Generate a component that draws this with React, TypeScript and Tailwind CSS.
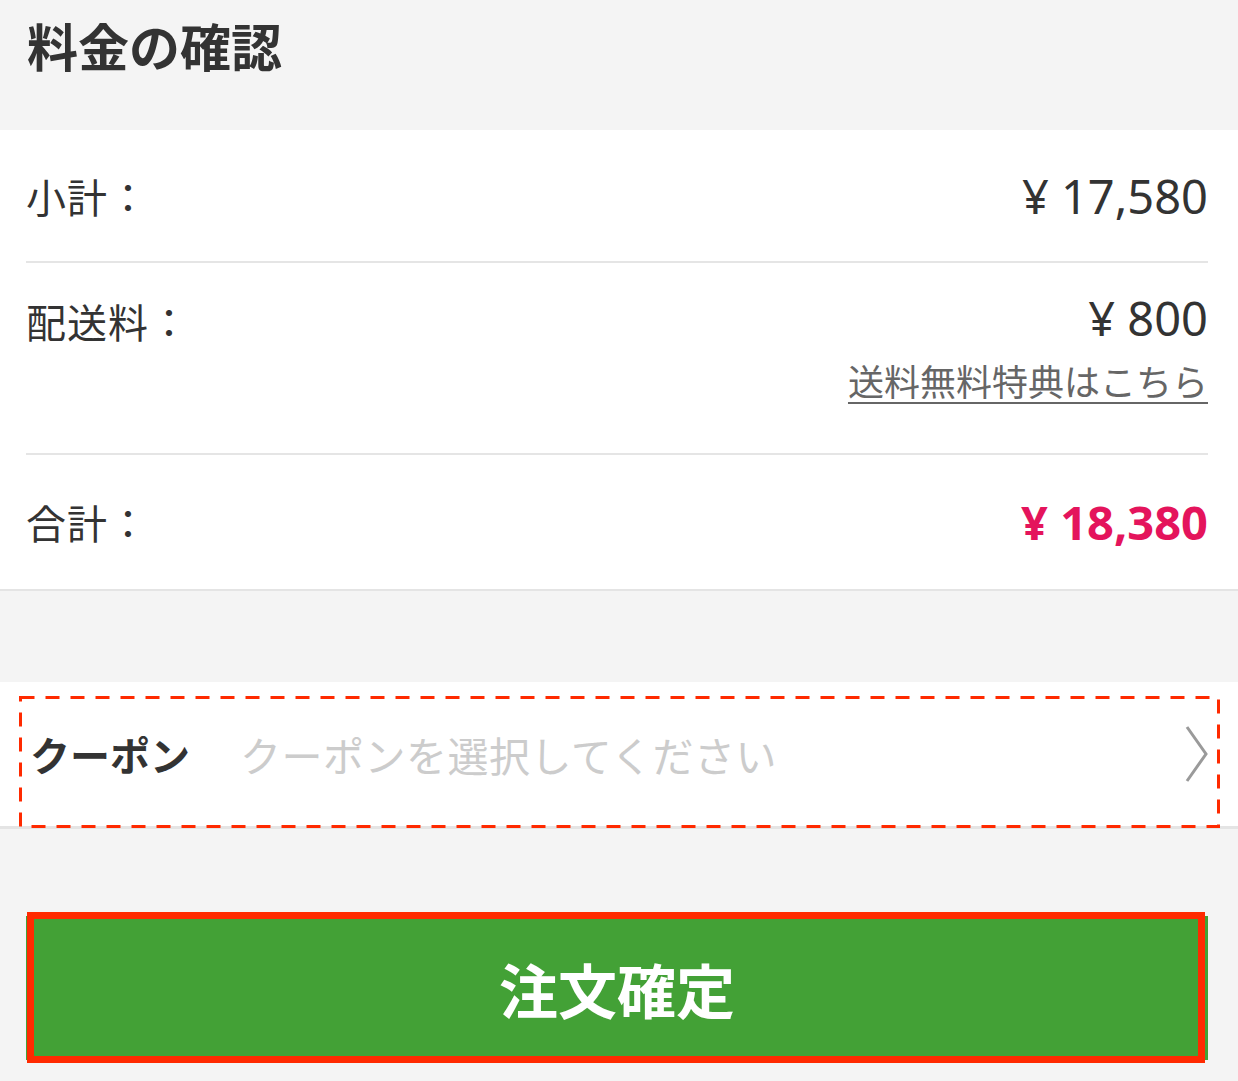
import React from 'react';

const font = "font-['Noto_Sans_CJK_JP',sans-serif]";
const num = "font-['Noto_Sans','Noto_Sans_CJK_JP',sans-serif]";

function PriceRow({ label, children, className }: { label: string; children: React.ReactNode; className?: string }) {
  return (
    <div className={className}>
      <span className="text-[40px] leading-[56px] tracking-[1px] text-[#333]">{label}</span>
      {children}
    </div>
  );
}

export default function App() {
  return (
    <div className={`min-h-[1081px] bg-[#f4f4f4] ${font}`}>
      {/* 見出し */}
      <div className="h-[130px] pl-[27px] pt-[8px]">
        <h1 className="text-[51px] font-bold leading-[75px] text-[#333]">料金の確認</h1>
      </div>

      {/* 料金 */}
      <div className="bg-white border-b-2 border-[#e4e4e4]">
        <div className="ml-[26px] mr-[30px]">
          <PriceRow label="小計：" className="flex h-[133px] items-center justify-between border-b-2 border-[#e5e5e5]">
            <span className={`${num} text-[47px] leading-[56px] text-[#333]`}>¥ 17,580</span>
          </PriceRow>
          <div className="flex h-[192px] justify-between border-b-2 border-[#e5e5e5]">
            <span className="pt-[30px] text-[40px] leading-[56px] tracking-[1px] text-[#333]">配送料：</span>
            <div className="flex flex-col items-end pt-[27px]">
              <span className={`${num} text-[47px] leading-[56px] text-[#333]`}>¥ 800</span>
              <a href="#" className="mt-[8px] text-[36px] leading-[52px] text-[#666] underline decoration-2 underline-offset-[6px]">
                送料無料特典はこちら
              </a>
            </div>
          </div>
          <PriceRow label="合計：" className="flex h-[134px] items-center justify-between">
            <span className={`${num} text-[47px] font-bold leading-[56px] text-[#e4145c]`}>¥ 18,380</span>
          </PriceRow>
        </div>
      </div>

      <div className="h-[91px]" />

      {/* クーポン */}
      <div className="relative flex h-[147px] items-center border-b-[3px] border-[#e4e4e4] bg-white pl-[30px] pr-[30px]">
        <span className="text-[40px] font-bold leading-[56px] text-[#333]">クーポン</span>
        <span className="ml-[50px] flex-1 text-[41px] leading-[56px] tracking-[0.5px] text-[#ccc]">クーポンを選択してください</span>
        <svg width="24" height="58" viewBox="0 0 24 58" className="mr-[-1px]">
          <path d="M2 2 L21 29 L2 56" fill="none" stroke="#9a9a9a" strokeWidth="3" />
        </svg>
        <svg className="pointer-events-none absolute left-[19px] top-[14px] h-[132px] w-[1201px]" viewBox="0 0 1201 132">
          <rect x="1.5" y="1.5" width="1198" height="129" fill="none" stroke="#ff2a00" strokeWidth="3" strokeDasharray="14 11" />
        </svg>
      </div>

      {/* 注文確定 */}
      <div className="ml-[26px] mr-[30px] pt-[87px]">
        <button className="relative flex h-[144px] w-full items-center justify-center bg-[#43a136]">
          <span className="text-[59px] font-bold leading-none text-white">注文確定</span>
          <span className="pointer-events-none absolute -top-[4px] -bottom-[3px] left-[1px] right-[3px] border-[7px] border-[#ff2a00]" />
        </button>
      </div>
    </div>
  );
}
